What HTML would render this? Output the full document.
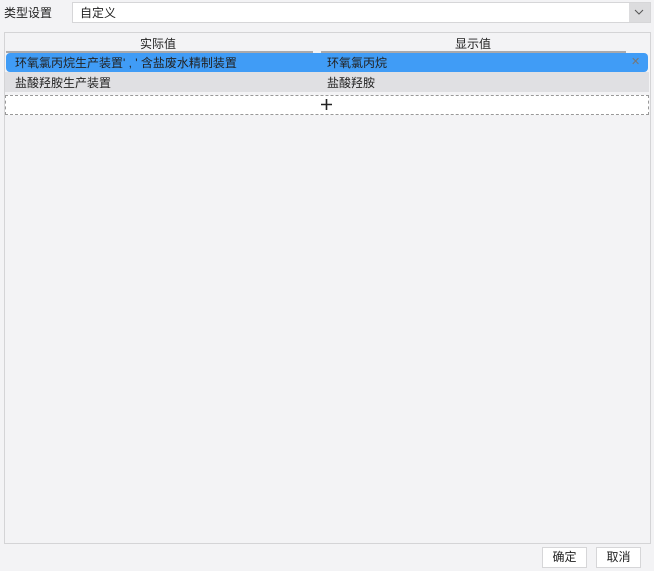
<!DOCTYPE html>
<html><head><meta charset="utf-8"><style>
body{margin:0;width:654px;height:571px;background:#f3f3f5;font-family:"Liberation Sans","Noto Sans CJK SC",sans-serif;font-size:12px;color:#222;position:relative;overflow:hidden}
.a{position:absolute}
</style></head><body>
<div class="a" style="left:4px;top:4px;">类型设置</div>
<div class="a" style="left:72px;top:2px;width:577px;height:19px;background:#fff;border:1px solid #d6d6d8;"></div>
<div class="a" style="left:80px;top:4px;">自定义</div>
<div class="a" style="left:629px;top:3px;width:21px;height:19px;background:#dcdcde;"></div>
<svg class="a" style="left:634px;top:8px" width="10" height="8"><path d="M1 2 L5 6 L9 2" stroke="#555" fill="none" stroke-width="1"/></svg>
<div class="a" style="left:4px;top:32px;width:645px;height:510px;border:1px solid #d4d4d6;"></div>
<div class="a" style="left:140px;top:35px;">实际值</div>
<div class="a" style="left:455px;top:35px;">显示值</div>
<div class="a" style="left:6px;top:51px;width:307px;height:2px;background:#a9a9ac"></div>
<div class="a" style="left:321px;top:51px;width:305px;height:2px;background:#a9a9ac"></div>
<div class="a" style="left:6px;top:53px;width:642px;height:19px;background:#409cf6;border-radius:4px"></div>
<div class="a" style="left:15px;top:54px;">环氧氯丙烷生产装置' , ' 含盐废水精制装置</div>
<div class="a" style="left:327px;top:54px;">环氧氯丙烷</div>
<div class="a" style="left:631px;top:55px;color:#777;font-size:11px">✕</div>
<div class="a" style="left:5px;top:72px;width:644px;height:20px;background:#e0e0e3;"></div>
<div class="a" style="left:15px;top:74px;">盐酸羟胺生产装置</div>
<div class="a" style="left:327px;top:74px;">盐酸羟胺</div>
<div class="a" style="left:5px;top:95px;width:642px;height:18px;background:#fff;border:1px dashed #999;"></div>
<svg class="a" style="left:320px;top:98px" width="13" height="13"><path d="M6.5 1V12M1 6.5H12" stroke="#222" stroke-width="1.6"/></svg>
<div class="a" style="left:542px;top:547px;width:43px;height:19px;background:#fff;border:1px solid #d6d6d8;text-align:center;line-height:19px">确定</div>
<div class="a" style="left:596px;top:547px;width:43px;height:19px;background:#fff;border:1px solid #d6d6d8;text-align:center;line-height:19px">取消</div>
</body></html>
